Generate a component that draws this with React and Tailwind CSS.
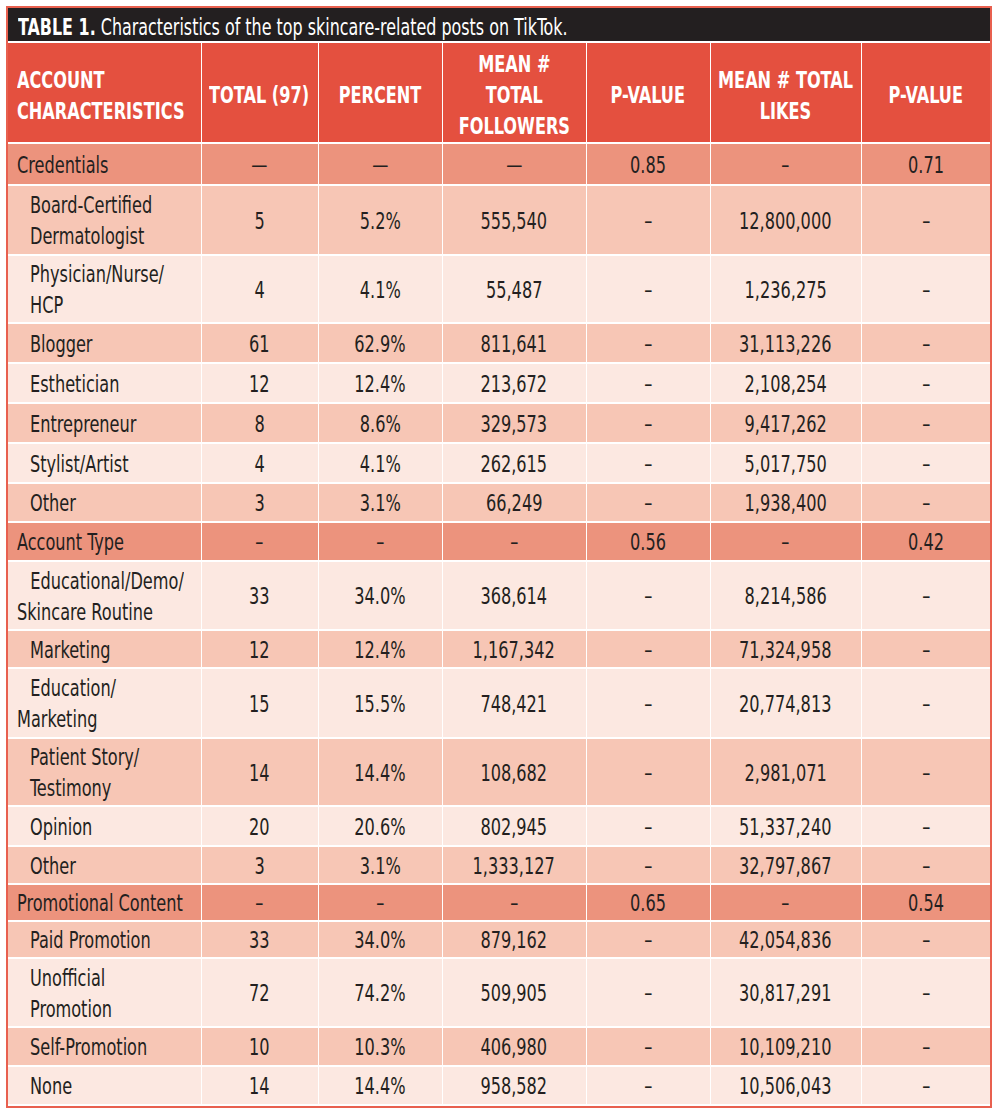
const COLS = [193, 117, 124, 144, 124, 151, 129];

const HEAD = [
  ['ACCOUNT', 'CHARACTERISTICS'],
  ['TOTAL (97)'],
  ['PERCENT'],
  ['MEAN #', 'TOTAL', 'FOLLOWERS'],
  ['P-VALUE'],
  ['MEAN # TOTAL', 'LIKES'],
  ['P-VALUE'],
];

const D = '–';

// kind: cat = section row, dark / light = striped rows
// hang = second line goes back to the section indent
const ROWS = [
  { kind: 'cat', h: 42, label: ['Credentials'], vals: ['—', '—', '—', '0.85', D, '0.71'] },
  { kind: 'dark', h: 70, label: ['Board-Certified', 'Dermatologist'], vals: ['5', '5.2%', '555,540', D, '12,800,000', D] },
  { kind: 'light', h: 68, label: ['Physician/Nurse/', 'HCP'], vals: ['4', '4.1%', '55,487', D, '1,236,275', D] },
  { kind: 'dark', h: 40, label: ['Blogger'], vals: ['61', '62.9%', '811,641', D, '31,113,226', D] },
  { kind: 'light', h: 40, label: ['Esthetician'], vals: ['12', '12.4%', '213,672', D, '2,108,254', D] },
  { kind: 'dark', h: 40, label: ['Entrepreneur'], vals: ['8', '8.6%', '329,573', D, '9,417,262', D] },
  { kind: 'light', h: 40, label: ['Stylist/Artist'], vals: ['4', '4.1%', '262,615', D, '5,017,750', D] },
  { kind: 'dark', h: 39, label: ['Other'], vals: ['3', '3.1%', '66,249', D, '1,938,400', D] },
  { kind: 'cat', h: 39, label: ['Account Type'], vals: [D, D, D, '0.56', D, '0.42'] },
  { kind: 'light', h: 69, hang: true, label: ['Educational/Demo/', 'Skincare Routine'], vals: ['33', '34.0%', '368,614', D, '8,214,586', D] },
  { kind: 'dark', h: 38, label: ['Marketing'], vals: ['12', '12.4%', '1,167,342', D, '71,324,958', D] },
  { kind: 'light', h: 70, hang: true, label: ['Education/', 'Marketing'], vals: ['15', '15.5%', '748,421', D, '20,774,813', D] },
  { kind: 'dark', h: 68, label: ['Patient Story/', 'Testimony'], vals: ['14', '14.4%', '108,682', D, '2,981,071', D] },
  { kind: 'light', h: 40, label: ['Opinion'], vals: ['20', '20.6%', '802,945', D, '51,337,240', D] },
  { kind: 'dark', h: 38, label: ['Other'], vals: ['3', '3.1%', '1,333,127', D, '32,797,867', D] },
  { kind: 'cat', h: 37, label: ['Promotional Content'], vals: [D, D, D, '0.65', D, '0.54'] },
  { kind: 'dark', h: 37, label: ['Paid Promotion'], vals: ['33', '34.0%', '879,162', D, '42,054,836', D] },
  { kind: 'light', h: 69, label: ['Unofficial', 'Promotion'], vals: ['72', '74.2%', '509,905', D, '30,817,291', D] },
  { kind: 'dark', h: 39, label: ['Self-Promotion'], vals: ['10', '10.3%', '406,980', D, '10,109,210', D] },
  { kind: 'light', h: 39, label: ['None'], vals: ['14', '14.4%', '958,582', D, '10,506,043', D] },
];

const BG = {
  cat: 'bg-[#ec937d]',
  dark: 'bg-[#f7c6b5]',
  light: 'bg-[#fce8e1]',
};

// the source face is a condensed sans; squeeze DejaVu Sans Condensed to match
function Cell({ lines, left, hang }) {
  return (
    <div className={`flex ${left ? 'justify-start' : 'justify-center'}`}>
      <span
        className={`inline-block whitespace-nowrap scale-x-[0.78] ${left ? 'origin-left text-left' : 'text-center'} ${hang ? 'indent-[17px]' : ''}`}
      >
        {lines.map((l, i) => (
          <span key={i}>
            {i > 0 && <br />}
            {l}
          </span>
        ))}
      </span>
    </div>
  );
}

export default function App() {
  return (
    <div className="bg-white min-h-[1119px] pt-[6px] pl-[6px] font-['DejaVu_Sans_Condensed','DejaVu_Sans',sans-serif] text-[#231f20]">
      <div className="w-[986px] border-2 border-[#e8604f]">
        <div className="h-[35px] bg-[#231f20] text-white text-[23px] leading-[35px] pt-[2px] pl-[10px] border-b-2 border-white">
          <div className="flex">
            <span className="inline-block whitespace-nowrap origin-left scale-x-[0.77]">
              <span className="font-bold">TABLE 1.</span> Characteristics of the top skincare-related posts on TikTok.
            </span>
          </div>
        </div>
        <table className="table-fixed border-collapse w-[982px] text-[23px] leading-[31px]">
          <colgroup>
            {COLS.map((w, i) => (
              <col key={i} style={{ width: w }} />
            ))}
          </colgroup>
          <thead>
            <tr className="h-[100px] bg-[#e4503f] text-white font-bold">
              {HEAD.map((lines, i) => (
                <th
                  key={i}
                  className={`border-x border-b-2 border-white p-0 pt-[6px] align-middle font-bold ${i === 0 ? 'pl-[9px] border-l-0' : ''} ${i === 6 ? 'border-r-0' : ''}`}
                >
                  <Cell lines={lines} left={i === 0} />
                </th>
              ))}
            </tr>
          </thead>
          <tbody>
            {ROWS.map((r, ri) => (
              <tr key={ri} className={BG[r.kind]} style={{ height: r.h }}>
                <td
                  className={`border-r border-b-2 border-white p-0 pt-[2px] align-middle ${r.kind === 'cat' || r.hang ? 'pl-[9px]' : 'pl-[22px]'} ${ri === ROWS.length - 1 ? 'border-b-0' : ''}`}
                >
                  <Cell lines={r.label} left hang={r.hang} />
                </td>
                {r.vals.map((v, vi) => (
                  <td
                    key={vi}
                    className={`border-x border-b-2 border-white p-0 pt-[2px] align-middle ${vi === 5 ? 'border-r-0' : ''} ${ri === ROWS.length - 1 ? 'border-b-0' : ''}`}
                  >
                    <Cell lines={[v]} />
                  </td>
                ))}
              </tr>
            ))}
          </tbody>
        </table>
      </div>
    </div>
  );
}
